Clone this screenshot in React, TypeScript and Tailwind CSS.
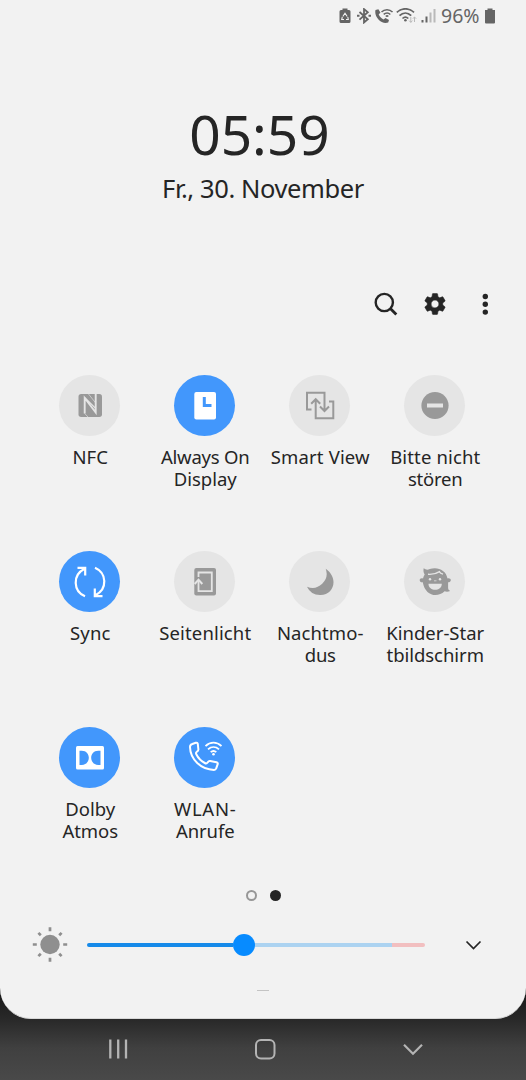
import type { ReactNode } from 'react'
import clsx from 'clsx'

type Tile = {
  // [text, tracking class]
  lines: [string, string][]
  active?: boolean
  icon: ReactNode
}

// All tile icons share a 32x32 box, drawn with currentColor
const NfcIcon = () => (
  <svg className="size-8" viewBox="0 0 32 32">
    <rect x="4.500" y="4" width="23.500" height="23" rx="2.700" fill="currentColor" />
    <path d="M10.700 23.500V8l11 14.500V4" fill="none" stroke="#e5e5e5" strokeWidth="1.900" />
    <path d="M10.700 7.500l11 11" fill="none" stroke="#e5e5e5" strokeWidth="1.100" />
    <path d="M14.500 4l7.200 9M10.700 23.500l3.300 3.500" fill="none" stroke="#e5e5e5" strokeWidth=".9" opacity=".7" />
  </svg>
)

const AlwaysOnIcon = () => (
  <svg className="size-8" viewBox="0 0 32 32">
    <rect x="5.300" y="2" width="21.700" height="27.500" rx="2" fill="currentColor" />
    <path d="M15.300 7v8.600h7.200" fill="none" stroke="#4297fc" strokeWidth="3" />
  </svg>
)

const SmartViewIcon = () => (
  <svg className="size-8" viewBox="0 0 32 32" fill="none" stroke="currentColor" strokeWidth="2">
    <path d="M7.500 19.500H3V2.700h17.500v18M16 16.500l4.500 4.500 4.500-4.500" />
    <path d="M25 11.500h4.300v16.800H11.700V10M7.200 13.700l4.500-4.500 4.500 4.500" />
  </svg>
)

const DoNotDisturbIcon = () => (
  <svg className="size-8" viewBox="0 0 32 32">
    <circle cx="16" cy="15.500" r="13.600" fill="currentColor" />
    <rect x="8" y="13.500" width="16" height="4" fill="#e5e5e5" />
  </svg>
)

const SyncIcon = () => (
  <svg className="size-8" viewBox="0 0 32 32" fill="none" stroke="currentColor" strokeWidth="2.200">
    <path d="M11 30.300C-1 25 -1.500 9 10.200 3M3.500 1.900h7.700v7.600" />
    <path d="M21 1.700C33 7 33.500 23 21.800 29M28.500 30.100h-7.700v-7.600" />
  </svg>
)

const EdgeLightIcon = () => (
  <svg className="size-8" viewBox="0 0 32 32">
    <rect x="5.300" y="2" width="21.700" height="27.500" rx="2" fill="currentColor" />
    <path d="M9.500 11V6.500h13.300v18.700H9.500V15" fill="none" stroke="#e5e5e5" strokeWidth="1.800" />
    <path d="M5.700 18l3.800-4.300 3.800 4.300" fill="none" stroke="#e5e5e5" strokeWidth="2" />
  </svg>
)

const NightIcon = () => (
  <svg className="size-8" viewBox="0 0 32 32" fill="currentColor">
    <path d="M21.700 2.700A14.200 14.200 0 0 1 3 20.700 14.500 14.500 0 0 0 16.500 29C30 29 35 12 21.700 2.700z" />
  </svg>
)

const KidsIcon = () => (
  <svg className="size-8" viewBox="0 0 32 32">
    <path
      d="M4.700 2.300c1.800 1.500 4 1.700 6 .8C18.500.5 27 4 28.500 12.500c1.700-.5 3.300.3 3.300 1.700 0 1.300-1.200 2-2.700 2.100v5.500c0 1.500.7 2.400 2 3.300-2 .8-3.800.9-5.500.2C18 32.500 6 29.500 3.800 16.200 2 16.500.7 15.700.7 14.200s1.300-2.300 3.300-1.700c.3-1.500.8-2.700 1.700-4C4.500 7 4.200 4.500 4.700 2.300z"
      fill="currentColor"
    />
    <path d="M9 8.300c4.500.3 8.500-.6 11.500-2.600.6 1.200 1.800 2 3.500 2.500" fill="none" stroke="#e5e5e5" strokeWidth="1.400" />
    <circle cx="11" cy="13.300" r="1.200" fill="#e5e5e5" />
    <circle cx="21" cy="13.300" r="1.200" fill="#e5e5e5" />
    <path d="M9.500 17.800h13.300c0 8-13.300 8-13.300 0z" fill="#e5e5e5" />
    <path d="M15 14.800h2.500" stroke="#e5e5e5" strokeWidth=".7" />
  </svg>
)

const DolbyIcon = () => (
  <svg className="size-8" viewBox="0 0 32 32">
    <rect x="2" y="4" width="28" height="23.500" rx="1.500" fill="currentColor" />
    <path d="M5.500 8.700h2.200c9.500 0 9.500 14.200 0 14.200H5.500zM26.500 8.700h-2.200c-9.500 0-9.500 14.200 0 14.200h2.200z" fill="#4297fc" />
  </svg>
)

const WifiCallIcon = () => (
  <svg className="size-[34px]" viewBox="0 0 34 34" fill="none" stroke="currentColor" strokeWidth="2" strokeLinejoin="round">
    <path d="M4.300 3l3.500-1.200c1.100-.3 1.800.2 2 1.200l.6 5.500c0 1-.4 1.500-1.500 2.200-1 .7-1.200 1.300-.6 2.500 2 4 4.700 6.800 8.500 8.800 1.300.7 2 .6 2.800-.5.700-1.200 1.500-1.600 2.600-1.400l6.300 1.100c1.100.3 1.500 1 1.200 2l-1.500 4.200c-.4 1-1 1.500-2.200 1.500C13 28.500 2.300 18.500 2 6c0-1.800.7-2.500 2.300-3z" />
    <g strokeWidth="1.800">
      <path d="M17.500 5.100c4.700-4.600 11.300-4.600 16 0" />
      <path d="M20 8.400c3.300-3 7.700-3 11 0" />
      <path d="M22.700 11.200c1.700-1.500 3.900-1.500 5.600 0" />
    </g>
    <circle cx="25.500" cy="13.200" r="1.300" fill="currentColor" stroke="none" />
  </svg>
)

const tiles: Tile[] = [
  { lines: [['NFC', 'tracking-normal']], icon: <NfcIcon /> },
  {
    lines: [['Always On', 'tracking-[-0.2px]'], ['Display', 'tracking-normal']],
    active: true,
    icon: <AlwaysOnIcon />,
  },
  { lines: [['Smart View', 'tracking-[0.15px]']], icon: <SmartViewIcon /> },
  { lines: [['Bitte nicht', 'tracking-[0.15px]'], ['stören', 'tracking-[-0.2px]']], icon: <DoNotDisturbIcon /> },
  { lines: [['Sync', 'tracking-[0.1px]']], active: true, icon: <SyncIcon /> },
  { lines: [['Seitenlicht', 'tracking-[0.15px]']], icon: <EdgeLightIcon /> },
  { lines: [['Nachtmo-', 'tracking-[0.1px]'], ['dus', 'tracking-[-0.2px]']], icon: <NightIcon /> },
  { lines: [['Kinder-Star', 'tracking-normal'], ['tbildschirm', 'tracking-[-0.05px]']], icon: <KidsIcon /> },
  { lines: [['Dolby', 'tracking-normal'], ['Atmos', 'tracking-[-0.1px]']], active: true, icon: <DolbyIcon /> },
  { lines: [['WLAN-', 'tracking-[0.8px]'], ['Anrufe', 'tracking-[-0.1px]']], active: true, icon: <WifiCallIcon /> },
]

const StatusBar = () => (
  <div className="flex h-8 items-center justify-end pr-[30px] text-[#656565]">
    <svg className="h-4 w-3" viewBox="0 0 12 16">
      <path d="M3.500 .5h5V2H10A1.500 1.500 0 0 1 11.500 3.500v10A1.500 1.500 0 0 1 10 15H2A1.500 1.500 0 0 1 .5 13.500v-10A1.500 1.500 0 0 1 2 2h1.500z" fill="currentColor" />
      <path d="M3.800 8.500L6 5.300l2.200 3.200M8.800 9l.5 2.500H7M5 11.500H2.700L3.300 9" fill="none" stroke="#f2f2f2" strokeWidth="1.100" />
    </svg>
    <svg className="ml-[5px] h-4 w-4" viewBox="0 0 16 16" fill="none" stroke="currentColor" strokeWidth="1.800">
      <path d="M3.500 4l8.300 7.300L8 14.500V1.100l3.800 3.200-8.300 7.300" />
      <path d="M1 7.800h2.500M12.500 7.800H15" strokeWidth="2" />
    </svg>
    <svg className="ml-[3px] h-4 w-[18px]" viewBox="0 0 18 16">
      <path d="M.5 2l2.900-.8 2.100 3.500-1.800 1.600c.8 2.300 2.600 4.200 4.900 5.300l1.900-1.500 3.500 1.900-.8 2.500C6.500 17-1.200 8.500.5 2z" fill="currentColor" />
      <path d="M6.500 4.100c3-3.300 8-3.300 11 0M8.700 6.400c2-2 4.700-2 6.600 0M10.800 8.500c.8-.8 1.700-.8 2.500 0" fill="none" stroke="currentColor" strokeWidth="1.500" />
    </svg>
    <svg className="ml-[3px] h-4 w-[21px]" viewBox="0 0 21 16" fill="none" stroke="currentColor" strokeWidth="1.700">
      <path d="M.8 4.300c5-4.700 12.200-4.700 17.200 0M3.500 7.700c3.600-3.500 8.200-3.500 11.700 0M6.500 10.500c1.800-1.700 4-1.700 5.800 0" />
      <circle cx="9.400" cy="12.300" r="1.300" fill="currentColor" stroke="none" />
      <path d="M14.800 9V14.500m-1.700-1.900l1.700 1.700 1.700-1.700M18.500 14V8.800m-1.600 1.900l1.600-1.700 1.600 1.700" stroke="#b9b9b9" strokeWidth="1" />
    </svg>
    <svg className="ml-1 h-4 w-[15px]" viewBox="0 0 15 16" fill="currentColor">
      <rect x=".5" y="12" width="2" height="2.500" />
      <rect x="4.500" y="8.500" width="2" height="6" />
      <rect x="8.500" y="4.500" width="2" height="10" opacity=".4" />
      <rect x="12.500" y="1" width="2" height="13.500" opacity=".4" />
    </svg>
    <span className="ml-[5px] w-[42px] text-[19.500px] leading-8 whitespace-nowrap">96%</span>
    <svg className="ml-px h-4 w-3" viewBox="0 0 12 16" fill="currentColor">
      <path d="M3.500 .5h5V2H11v12.500a1 1 0 0 1-1 1H2a1 1 0 0 1-1-1V2h2.500z" />
    </svg>
  </div>
)

const QuickTile = ({ lines, active, icon }: Tile) => (
  <div className="flex h-44 flex-col items-center">
    <div
      className={clsx(
        'flex size-[61px] shrink-0 items-center justify-center rounded-full',
        active ? 'bg-[#4297fc] text-white' : 'bg-[#e5e5e5] text-[#999999]',
      )}
    >
      {icon}
    </div>
    <div className="mt-[10px] pl-[1.500px] text-center text-[18.500px] leading-[22.400px] whitespace-nowrap text-[#252525]">
      {lines.map(([text, tracking]) => (
        <div key={text} className={tracking}>
          {text}
        </div>
      ))}
    </div>
  </div>
)

const Brightness = () => (
  <div className="flex h-10 items-center pl-[31px]">
    <svg className="h-[38px] w-[38px]" viewBox="0 0 38 38" stroke="#8f8f8f">
      <circle cx="19" cy="18.500" r="9.700" fill="#8f8f8f" stroke="none" />
      <path d="M19 1.300v4M19 31.700v4M1.800 18.500h4M32.200 18.500h4" strokeWidth="2.700" />
      <path d="M7.400 6.900l2.400 2.400M28.200 27.700l2.400 2.400M7.400 30.100l2.400-2.400M28.200 9.300l2.400-2.400" strokeWidth="2.700" />
    </svg>
    <div className="ml-[18px] flex h-[22px] w-[338px] items-center">
      <div className="h-1 w-[146px] rounded-l-full bg-[#168ae9]" />
      <div className="size-[22px] rounded-full bg-[#078bff]" />
      <div className="h-1 w-[137px] bg-[#acd3f1]" />
      <div className="h-1 w-[33px] rounded-r-full bg-[#f2bfc0]" />
    </div>
    <svg className="ml-[39px] h-4 w-[18px]" viewBox="0 0 18 16" fill="none" stroke="#252525" strokeWidth="1.700">
      <path d="M2.500 4.500l7 7 7-7" />
    </svg>
  </div>
)

const NavBar = () => (
  <div className="flex h-[60px] items-center text-[#b4b4b4]">
    <svg className="ml-[108px] h-5 w-5" viewBox="0 0 20 20" fill="none" stroke="currentColor" strokeWidth="2.300">
      <path d="M2.300 .5v19M10.200 .5v19M18 .5v19" />
    </svg>
    <svg className="ml-[126px] h-[22px] w-[22px]" viewBox="0 0 22 22" fill="none" stroke="currentColor" strokeWidth="2">
      <rect x="2" y="2" width="18.500" height="18.500" rx="5" />
    </svg>
    <svg className="ml-[126px] h-5 w-[22px]" viewBox="0 0 22 20" fill="none" stroke="currentColor" strokeWidth="2.200">
      <path d="M2 5.800l9 9 9-9" />
    </svg>
  </div>
)

const App = () => {
  return (
    <div className="h-[1080px] w-[526px] overflow-hidden bg-[linear-gradient(to_bottom,#111_0,#111_980px,#292929_1020px,#404040_1048px,#494949_1080px)]">
      <div className="flex h-[1019px] flex-col rounded-b-[31px] border-b border-[#d8d8d8] bg-[#f2f2f2] font-['Noto_Sans',sans-serif]">
        <StatusBar />

        <div className="mt-[66px] flex flex-col items-center text-[#252525]">
          <div className="pr-[7px] text-[55px] leading-[72px]">05:59</div>
          <div className="text-[25.500px] leading-9 tracking-[-0.4px]">Fr., 30. November</div>
        </div>

        <div className="mt-[83px] flex h-[30px] items-center justify-end pr-8 text-[#252525]">
          <svg className="size-[26px]" viewBox="0 0 26 26" fill="none" stroke="currentColor">
            <circle cx="12.300" cy="11.500" r="8.600" strokeWidth="2.400" />
            <path d="M18.300 17.500l6 6" strokeWidth="2.800" />
          </svg>
          <svg className="ml-6 size-[26px]" viewBox="0 0 24 24" fill="currentColor" stroke="currentColor" strokeWidth=".5" strokeLinejoin="round">
            <path d="M19.140 12.940c.04-.3.060-.61.060-.94 0-.32-.02-.64-.07-.94l2.030-1.580a.49.49 0 0 0 .12-.61l-1.920-3.320a.488.488 0 0 0-.59-.22l-2.390.96c-.5-.38-1.030-.7-1.620-.94l-.36-2.540a.484.484 0 0 0-.48-.41h-3.840c-.24 0-.43.17-.47.41l-.36 2.540c-.59.24-1.130.57-1.620.94l-2.390-.96c-.22-.08-.47 0-.59.22L2.740 8.870c-.12.21-.08.47.12.61l2.030 1.580c-.05.3-.09.63-.09.940s.02.64.07.940l-2.030 1.580a.49.49 0 0 0-.12.61l1.920 3.320c.12.22.37.29.59.22l2.390-.96c.5.38 1.030.7 1.620.94l.36 2.540c.05.24.24.41.48.41h3.840c.24 0 .44-.17.47-.41l.36-2.540c.59-.24 1.130-.56 1.620-.94l2.390.96c.22.08.47 0 .59-.22l1.920-3.320c.12-.22.07-.47-.12-.61l-2.010-1.580zM12 15.600A3.610 3.610 0 0 1 8.400 12c0-1.980 1.620-3.600 3.600-3.600s3.600 1.620 3.600 3.600-1.620 3.600-3.600 3.600z" />
          </svg>
          <svg className="ml-7 h-[26px] w-[18px]" viewBox="0 0 18 26" fill="currentColor">
            <circle cx="9.300" cy="5.500" r="2.700" />
            <circle cx="9.300" cy="13.300" r="2.700" />
            <circle cx="9.300" cy="21.100" r="2.700" />
          </svg>
        </div>

        <div className="mt-14 ml-8 grid w-[460px] grid-cols-4">
          {tiles.map((tile) => (
            <QuickTile key={tile.lines[0][0]} {...tile} />
          ))}
        </div>

        <div className="-mt-[13px] flex h-[11px] shrink-0 items-center justify-center gap-[13px]">
          <div className="size-[11px] rounded-full border-2 border-[#979797]" />
          <div className="size-[11px] rounded-full bg-[#252525]" />
        </div>

        <div className="mt-6">
          <Brightness />
        </div>
        <div className="mx-auto mt-[25px] h-px w-3 bg-[#c4c4c4]" />
      </div>
      <NavBar />
    </div>
  )
}

export default App
